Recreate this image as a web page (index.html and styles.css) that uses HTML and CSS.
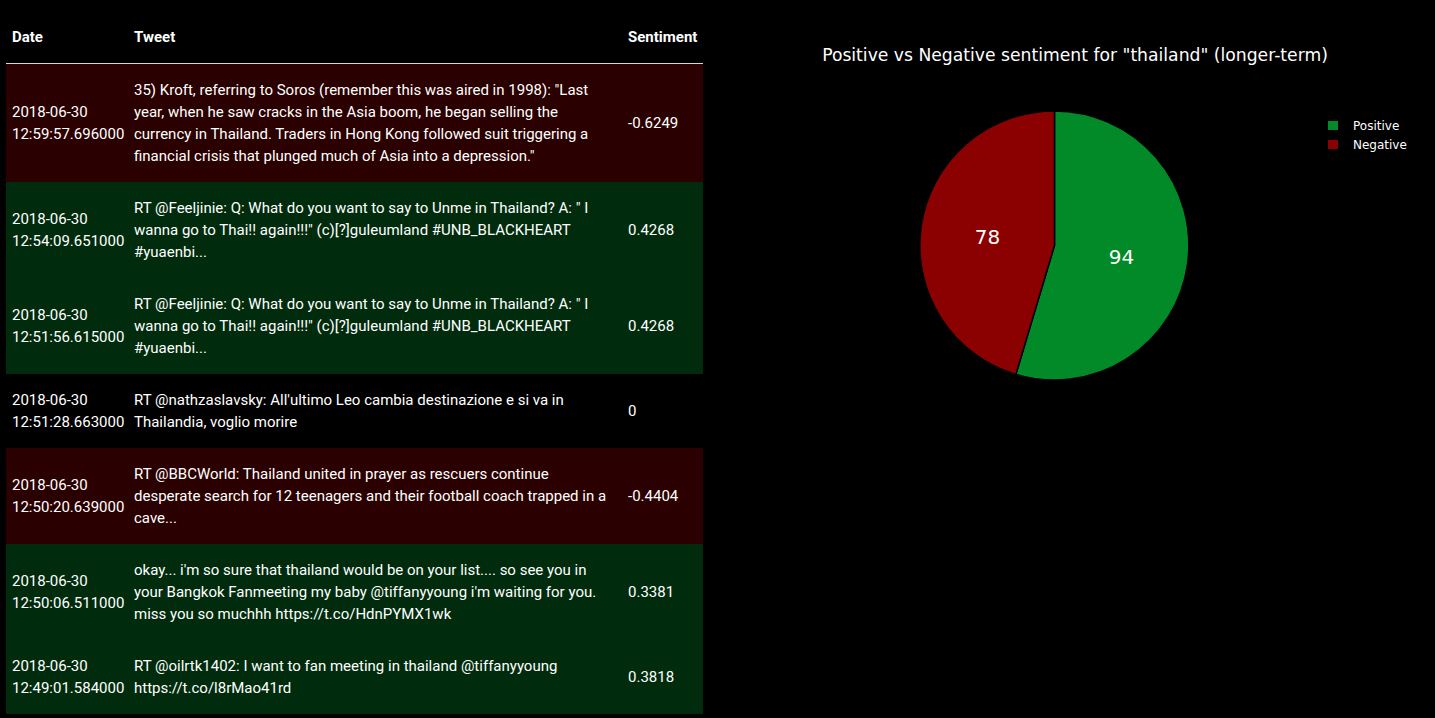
FILE: index.html
```html
<!DOCTYPE html>
<html>
<head>
<meta charset="utf-8">
<link rel="stylesheet" href="styles.css">
</head>
<body>
<div class="page">
  <div class="table-wrap">
    <table class="tweets">
      <colgroup>
        <col class="c-date">
        <col class="c-tweet">
        <col class="c-sent">
      </colgroup>
      <thead>
        <tr>
          <th class="date">Date</th>
          <th class="tweet">Tweet</th>
          <th class="sent">Sentiment</th>
        </tr>
      </thead>
      <tbody>
        <tr class="neg">
          <td class="date">2018-06-30<br>12:59:57.696000</td>
          <td class="tweet">35) Kroft, referring to Soros (remember this was aired in 1998): "Last<br>year, when he saw cracks in the Asia boom, he began selling the<br>currency in Thailand. Traders in Hong Kong followed suit triggering a<br>financial crisis that plunged much of Asia into a depression."</td>
          <td class="sent">-0.6249</td>
        </tr>
        <tr class="pos">
          <td class="date">2018-06-30<br>12:54:09.651000</td>
          <td class="tweet">RT @Feeljinie: Q: What do you want to say to Unme in Thailand? A: " I<br>wanna go to Thai!! again!!!" (c)[?]guleumland #UNB_BLACKHEART<br>#yuaenbi...</td>
          <td class="sent">0.4268</td>
        </tr>
        <tr class="pos">
          <td class="date">2018-06-30<br>12:51:56.615000</td>
          <td class="tweet">RT @Feeljinie: Q: What do you want to say to Unme in Thailand? A: " I<br>wanna go to Thai!! again!!!" (c)[?]guleumland #UNB_BLACKHEART<br>#yuaenbi...</td>
          <td class="sent">0.4268</td>
        </tr>
        <tr class="neu">
          <td class="date">2018-06-30<br>12:51:28.663000</td>
          <td class="tweet">RT @nathzaslavsky: All'ultimo Leo cambia destinazione e si va in<br>Thailandia, voglio morire</td>
          <td class="sent">0</td>
        </tr>
        <tr class="neg">
          <td class="date">2018-06-30<br>12:50:20.639000</td>
          <td class="tweet">RT @BBCWorld: Thailand united in prayer as rescuers continue<br>desperate search for 12 teenagers and their football coach trapped in a<br>cave...</td>
          <td class="sent">-0.4404</td>
        </tr>
        <tr class="pos">
          <td class="date">2018-06-30<br>12:50:06.511000</td>
          <td class="tweet">okay... i'm so sure that thailand would be on your list.... so see you in<br>your Bangkok Fanmeeting my baby @tiffanyyoung i'm waiting for you.<br>miss you so muchhh https://t.co/HdnPYMX1wk</td>
          <td class="sent">0.3381</td>
        </tr>
        <tr class="pos">
          <td class="date">2018-06-30<br>12:49:01.584000</td>
          <td class="tweet">RT @oilrtk1402: I want to fan meeting in thailand @tiffanyyoung<br>https://t.co/l8rMao41rd</td>
          <td class="sent">0.3818</td>
        </tr>
      </tbody>
    </table>
  </div>
  <div class="chart">
    <svg class="pie-svg" width="732" height="420" viewBox="0 0 732 420">
      <text class="chart-title" x="372" y="61" text-anchor="middle">Positive vs Negative sentiment for "thailand" (longer-term)</text>
      <path class="slice-pos" d="M351.5,245.5 L351.5,111 A134.5,134.5 0 1 1 312.9,374.4 Z"/>
      <path class="slice-neg" d="M351.5,245.5 L312.9,374.4 A134.5,134.5 0 0 1 351.5,111 Z"/>
      <text class="slice-label" x="418.5" y="264" text-anchor="middle">94</text>
      <text class="slice-label" x="284.5" y="244" text-anchor="middle">78</text>
      <rect class="leg-pos" x="625" y="121" width="10" height="9"/>
      <text class="leg-text" x="650" y="130">Positive</text>
      <rect class="leg-neg" x="625" y="140" width="10" height="9"/>
      <text class="leg-text" x="650" y="149">Negative</text>
    </svg>
  </div>
</div>
</body>
</html>
```

FILE: styles.css
```css
html, body {
  margin: 0;
  padding: 0;
  background: #000;
}

.page {
  display: flex;
  align-items: flex-start;
  width: 1435px;
  height: 718px;
  overflow: hidden;
  background: #000;
}

.table-wrap {
  padding: 11px 0 0 6px;
  width: 697px;
  flex: none;
}

.tweets {
  width: 697px;
  table-layout: fixed;
  border-collapse: collapse;
  font-family: Roboto, "Liberation Sans", sans-serif;
  font-size: 15px;
  line-height: 22px;
  color: #fff;
}

.c-date { width: 123px; }
.c-tweet { width: 494px; }
.c-sent { width: 80px; }

.tweets th {
  text-align: left;
  font-weight: 700;
  font-size: 15px;
  padding: 15px 5px;
  border-bottom: 1px solid #d6d6d6;
  vertical-align: middle;
  white-space: nowrap;
}

.tweets td {
  padding: 15px 5px;
  vertical-align: middle;
  text-align: left;
}

.tweets .date {
  padding-left: 6px;
  padding-right: 0;
  white-space: nowrap;
}

.tweets td.tweet {
  padding-right: 0;
  white-space: nowrap;
}

.tweets tr.neg { background: #2a0000; }
.tweets tr.pos { background: #002c0d; }
.tweets tr.neu { background: #000; }

.chart {
  flex: none;
  width: 732px;
}

.pie-svg {
  display: block;
}

.chart-title {
  font-family: "DejaVu Sans", Verdana, sans-serif;
  font-size: 17.2px;
  fill: #fff;
}

.slice-pos {
  fill: #028a29;
  stroke: #000;
  stroke-width: 1.5;
}

.slice-neg {
  fill: #8b0000;
  stroke: #000;
  stroke-width: 1.5;
}

.slice-label {
  font-family: "DejaVu Sans", Verdana, sans-serif;
  font-size: 20px;
  fill: #fff;
}

.leg-pos { fill: #028a29; }
.leg-neg { fill: #8b0000; }

.leg-text {
  font-family: "DejaVu Sans", Verdana, sans-serif;
  font-size: 12px;
  fill: #fff;
}
```
